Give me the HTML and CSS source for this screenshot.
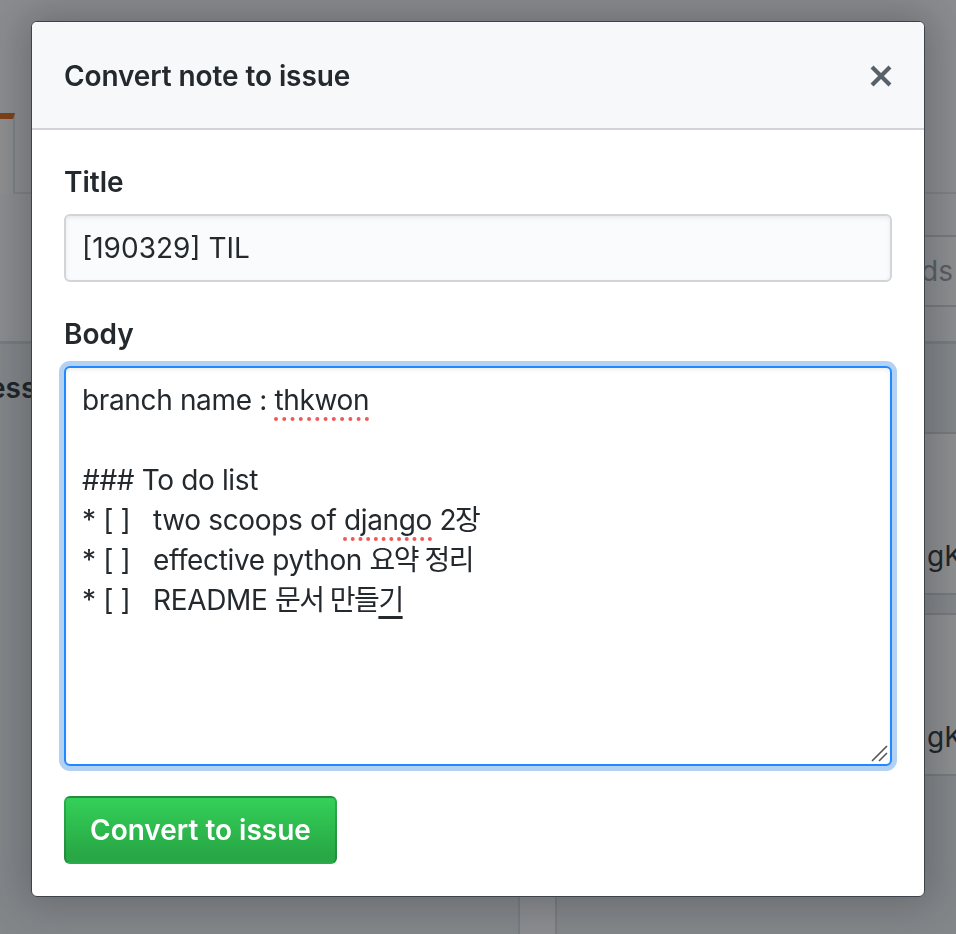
FILE: index.html
```html
<!DOCTYPE html>
<html lang="ko">
<head>
<meta charset="utf-8">
<title>Convert note to issue</title>
<link rel="stylesheet" href="styles.css">
</head>
<body>
<div class="page" aria-hidden="true">
  <div class="repohead">
    <div class="reponav"><span class="reponav-tab"></span></div>
  </div>
  <div class="project-bar">
    <div class="filter">Filter cards</div>
  </div>
  <div class="columns">
    <section class="column column-a">
      <h3 class="column-title"><span class="column-name">In progress</span></h3>
    </section>
    <div class="column-gap"></div>
    <section class="column column-b">
      <div class="card"><span class="card-text">gKw3</span></div>
      <div class="card"><span class="card-text">gKw3</span></div>
    </section>
  </div>
</div>

<div class="overlay">
  <div class="modal" role="dialog" aria-labelledby="modal-title">
    <div class="modal-header">
      <h2 class="modal-title" id="modal-title">Convert note to issue</h2>
      <button class="close" type="button" aria-label="Close">
        <svg width="24" height="32" viewBox="0 0 12 16" aria-hidden="true"><path fill="#586069" d="M7.48 8l3.75 3.75-1.48 1.48L6 9.480l-3.75 3.75-1.48-1.48L4.52 8 .77 4.25l1.48-1.48L6 6.52l3.75-3.75 1.48 1.48L7.48 8z"/></svg>
      </button>
    </div>
    <form class="modal-body">
      <div class="form-group">
        <label class="label" for="issue-title">Title</label>
        <input class="input" id="issue-title" type="text" value="[190329] TIL">
      </div>
      <div class="form-group">
        <label class="label">Body</label>
        <div class="textarea" role="textbox" aria-multiline="true"><span class="line">branch name : <span class="spell">thkwon</span></span>
<span class="line"> </span>
<span class="line">### To do list</span>
<span class="line">* [ ]   two scoops of <span class="spell">django</span> <span class="ko">2장</span></span>
<span class="line">* [ ]   effective python <span class="ko">요약 정리</span></span>
<span class="line">* [ ]   README <span class="ko">문서 만들<span class="ime">기</span></span></span><svg class="grip" width="18" height="18" viewBox="0 0 18 18" aria-hidden="true"><path d="M2 17 L17 2 M9 17 L17 9" stroke="#555" stroke-width="1.6" fill="none"/></svg></div>
      </div>
      <button class="btn-primary" type="button">Convert to issue</button>
    </form>
  </div>
</div>
</body>
</html>
```

FILE: styles.css
```css
* { box-sizing: border-box; }

html, body {
  margin: 0;
  padding: 0;
}

body {
  width: 956px;
  height: 934px;
  overflow: hidden;
  font-family: Inter, "Noto Sans CJK KR", sans-serif;
  color: #24292e;
  background: #fafbfc;
}

/* ---------- background page ---------- */
.page {
  width: 956px;
  height: 934px;
  display: flex;
  flex-direction: column;
  overflow: hidden;
}

.repohead {
  height: 194px;
  background: #fafbfc;
  border-bottom: 2px solid #e1e4e8;
}

.reponav {
  padding-top: 113px;
}

.reponav-tab {
  display: block;
  width: 15px;
  height: 81px;
  margin-bottom: -2px;
  background: #fff;
  border-top: 6px solid #e36209;
  border-right: 2px solid #e1e4e8;
}

.project-bar {
  height: 150px;
  background: #fafbfc;
  border-bottom: 3px solid #d6d9dd;
  display: flex;
  justify-content: flex-end;
  align-items: flex-start;
  padding-top: 41px;
}

.filter {
  width: 400px;
  height: 72px;
  border: 2px solid #d1d5da;
  border-right: 0;
  background: #fff;
  color: #959da5;
  font-size: 28px;
  line-height: 68px;
  text-align: right;
  padding-right: 3px;
}

.columns {
  flex: 1;
  display: flex;
}

.column {
  background: #eceef1;
}

.column-a {
  width: 520px;
  border-right: 2px solid #d6d9dd;
}

.column-gap {
  width: 35px;
  background: #fafbfc;
}

.column-b {
  flex: 1;
  border-left: 2px solid #d6d9dd;
  padding-top: 88px;
  padding-left: 20px;
}

.column-title {
  margin: 0;
  padding-top: 24px;
  font-size: 28px;
  line-height: 40px;
  font-weight: 600;
  white-space: nowrap;
}

.column-name {
  margin-left: -116px;
}

.card {
  height: 163px;
  margin-bottom: 18px;
  margin-right: -60px;
  background: #fff;
  border: 2px solid #d1d5da;
  border-radius: 6px;
  padding-top: 102px;
  padding-left: 348px;
}

.card-text {
  font-size: 28px;
  line-height: 40px;
  color: #24292e;
}

/* ---------- overlay + modal ---------- */
.overlay {
  position: fixed;
  inset: 0;
  background: rgba(27, 31, 35, 0.5);
  display: flex;
  justify-content: center;
  align-items: flex-start;
  padding-top: 21px;
}

.modal {
  width: 894px;
  background: #fff;
  border: 1px solid #3d434a;
  border-radius: 6px;
  overflow: hidden;
  box-shadow: 0 0 40px 8px rgba(27, 31, 35, 0.28);
}

.modal-header {
  display: flex;
  align-items: center;
  justify-content: space-between;
  padding: 33px 32px 31px;
  background: #f6f8fa;
  border-bottom: 2px solid #d1d5da;
}

.modal-title {
  margin: 0;
  font-size: 28px;
  line-height: 42px;
  font-weight: 600;
  letter-spacing: -0.1px;
}

.close {
  display: flex;
  padding: 0;
  margin: 0;
  border: 0;
  background: none;
  margin-right: -1px;
}

.modal-body {
  margin: 0;
  padding: 32px;
}

.form-group + .form-group {
  margin-top: 32px;
}

.label {
  display: block;
  font-size: 28px;
  line-height: 40px;
  font-weight: 600;
  margin-bottom: 12px;
}

.input {
  display: block;
  width: 100%;
  height: 68px;
  margin: 0;
  padding: 0 16px;
  font-family: inherit;
  font-size: 28px;
  color: #24292e;
  background: #fafbfc;
  border: 2px solid #d1d5da;
  border-radius: 6px;
  box-shadow: inset 0 2px 4px rgba(27, 31, 35, 0.075);
  outline: none;
}

.textarea {
  position: relative;
  height: 400px;
  padding: 12px 16px;
  font-size: 28px;
  line-height: 40px;
  letter-spacing: -0.35px;
  white-space: pre-wrap;
  background: #fff;
  border: 2px solid #2188ff;
  border-radius: 6px;
  box-shadow: inset 0 2px 4px rgba(27, 31, 35, 0.075), 0 0 0 5px rgba(3, 102, 214, 0.3);
}

.ko {
  letter-spacing: -1.5px;
}

.spell {
  text-decoration: underline dotted #ec5a5a;
  text-decoration-thickness: 4px;
  text-underline-offset: 7px;
}

.ime {
  text-decoration: underline solid #24292e;
  text-decoration-thickness: 3px;
  text-underline-offset: 6px;
}

.grip {
  position: absolute;
  right: 2px;
  bottom: 2px;
}

.btn-primary {
  margin-top: 30px;
  height: 68px;
  padding: 0 24px;
  font-family: inherit;
  font-size: 28px;
  line-height: 40px;
  font-weight: 600;
  color: #fff;
  background: linear-gradient(180deg, #34d058 0%, #28a745 90%);
  border: 2px solid rgba(27, 31, 35, 0.2);
  border-radius: 6px;
}
```
